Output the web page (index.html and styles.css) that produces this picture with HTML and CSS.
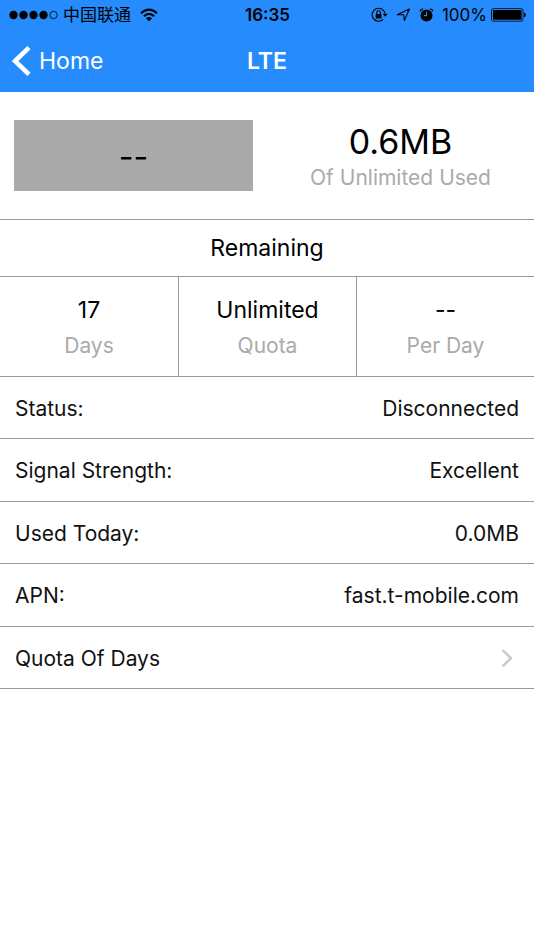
FILE: index.html
```html
<!DOCTYPE html>
<html lang="en">
<head>
<meta charset="utf-8">
<meta name="viewport" content="width=device-width, initial-scale=1">
<title>LTE</title>
<link rel="stylesheet" href="styles.css">
</head>
<body>
<header class="header">
  <div class="status-bar">
    <div class="status-side">
      <svg class="signal" width="50" height="10" viewBox="0 0 50 10" aria-hidden="true">
        <circle cx="4.5" cy="5" r="4.2"/><circle cx="14.5" cy="5" r="4.2"/><circle cx="24.5" cy="5" r="4.2"/><circle cx="34.5" cy="5" r="4.2"/>
        <circle cx="44.5" cy="5" r="3.7" fill="none" stroke="currentColor" stroke-width="0.8"/>
      </svg>
      <span class="carrier">中国联通</span>
      <svg class="wifi" width="18" height="14" viewBox="0 0 18 14" aria-hidden="true">
        <path d="M1 5.2Q9-2 17 5.2M3.9 8.2Q9 3.8 14.1 8.2" fill="none" stroke="currentColor" stroke-width="2"/>
        <path d="M6 10.4Q9 7.8 12 10.4L9 13.3Z"/>
      </svg>
    </div>
    <time class="clock">16:35</time>
    <div class="status-side status-right">
      <svg width="17" height="16" viewBox="0 0 17 16" aria-hidden="true">
        <path d="M12.2 12.4A6.5 6.5 0 1 1 14 6.5" fill="none" stroke="currentColor" stroke-width="1.1"/>
        <path d="M11.7 6.7H16.8L14.2 9.8Z"/>
        <rect x="4.7" y="6.9" width="5.8" height="4.6" rx="0.4"/>
        <path d="M5.8 7V5.6a1.8 1.8 0 0 1 3.6 0V7" fill="none" stroke="currentColor" stroke-width="1.1"/>
      </svg>
      <svg class="location" width="15" height="15" viewBox="0 0 15 15" aria-hidden="true">
        <path d="M1.2 6.8L13.4 1L8.4 12.6L7.7 6.8Z" fill="none" stroke="currentColor" stroke-width="1.1" stroke-linejoin="round"/>
      </svg>
      <svg class="alarm" width="15" height="14" viewBox="0 0 15 14" aria-hidden="true">
        <circle cx="7.5" cy="7.4" r="6"/>
        <path d="M1 3.4Q1.5 1.2 4 .8M14 3.4Q13.5 1.2 11 .8" fill="none" stroke="currentColor" stroke-width="1.2"/>
        <path class="alarm-hands" d="M7.6 4V7.6H5" fill="none" stroke-width="1.1"/>
      </svg>
      <span class="percent">100%</span>
      <svg class="battery" width="35" height="14" viewBox="0 0 35 14" aria-hidden="true">
        <rect x="0.5" y="0.6" width="31.5" height="12.6" rx="1.8" fill="none" stroke="currentColor" stroke-width="0.8"/>
        <rect x="1.9" y="2" width="28.7" height="9.8" rx="0.6"/>
        <path d="M33 4.6Q34.8 5 34.8 6.9T33 9.2Z"/>
      </svg>
    </div>
  </div>
  <nav class="nav-bar">
    <a class="back" href="#home">
      <svg width="19" height="30" viewBox="0 0 19 30" aria-hidden="true">
        <path d="M17 1.6L3 15L17 28.4" fill="none" stroke="currentColor" stroke-width="4.6"/>
      </svg>
      <span>Home</span>
    </a>
    <h1 class="title">LTE</h1>
  </nav>
</header>
<main>
  <section class="overview">
    <div class="gauge">--</div>
    <div class="usage">
      <div class="usage-value">0.6MB</div>
      <div class="caption">Of Unlimited Used</div>
    </div>
  </section>
  <section>
    <h2 class="section-title">Remaining</h2>
    <div class="stats">
      <div class="stat"><div class="stat-value">17</div><div class="caption">Days</div></div>
      <div class="stat"><div class="stat-value">Unlimited</div><div class="caption">Quota</div></div>
      <div class="stat"><div class="stat-value">--</div><div class="caption">Per Day</div></div>
    </div>
  </section>
  <section class="rows">
    <div class="row"><span>Status:</span><span>Disconnected</span></div>
    <div class="row"><span>Signal Strength:</span><span>Excellent</span></div>
    <div class="row"><span>Used Today:</span><span>0.0MB</span></div>
    <div class="row"><span>APN:</span><span>fast.t-mobile.com</span></div>
    <a class="row" href="#quota-of-days">
      <span>Quota Of Days</span>
      <svg class="chevron" width="12" height="20" viewBox="0 0 12 20" aria-hidden="true">
        <path d="M1.5 1L10 9.2L1.5 17.4" fill="none" stroke="currentColor" stroke-width="2.4"/>
      </svg>
    </a>
  </section>
</main>
</body>
</html>
```
FILE: styles.css
```css
* {
  box-sizing: border-box;
}

body {
  margin: 0;
  background: #fff;
  color: #000;
  font-family: Inter, "Noto Sans CJK SC", sans-serif;
  font-size: 21px;
  line-height: 28px;
}

svg {
  display: block;
  flex: none;
  fill: currentColor;
}

.header {
  background: #268bfc;
}

.status-bar {
  display: grid;
  grid-template-columns: 1fr auto 1fr;
  align-items: center;
  height: 30px;
  padding: 0 8px 0 9px;
  font-size: 17px;
}

.status-side {
  display: flex;
  align-items: center;
}

.status-right {
  justify-content: flex-end;
}

.carrier {
  margin: 0 9px 0 4px;
}

.clock {
  font-weight: 600;
}

.location {
  margin: 0 8px;
}

.alarm-hands {
  stroke: #268bfc;
}

.percent {
  margin: 0 4px 0 8px;
}

.nav-bar {
  display: grid;
  grid-template-columns: 1fr auto 1fr;
  align-items: center;
  height: 62px;
  padding: 0 12px;
  color: #fff;
  font-size: 23px;
}

.back {
  display: flex;
  align-items: center;
  gap: 8px;
  color: inherit;
  text-decoration: none;
}

.title {
  margin: 0;
  font-size: 23px;
  font-weight: 600;
}

.overview {
  display: grid;
  grid-template-columns: 1fr 1fr;
  align-items: center;
  height: 128px;
  border-bottom: 1px solid #999;
}

.gauge {
  margin: 0 14px;
  padding: 19px 0 16px;
  background: #aaa;
  font-size: 32px;
  line-height: 36px;
  text-align: center;
}

.usage {
  text-align: center;
}

.usage-value {
  font-size: 34px;
  line-height: 44px;
}

.caption {
  color: #aaa;
}

.section-title {
  margin: 0;
  padding: 14px 0;
  border-bottom: 1px solid #999;
  font-size: 23px;
  font-weight: 400;
  text-align: center;
}

.stats {
  display: grid;
  grid-template-columns: repeat(3, 1fr);
  border-bottom: 1px solid #999;
  text-align: center;
}

.stat {
  padding: 19px 0 16px;
}

.stat + .stat {
  border-left: 1px solid #999;
}

.stat-value {
  margin-bottom: 8px;
  font-size: 23px;
}

.row {
  display: flex;
  align-items: center;
  justify-content: space-between;
  height: 62px;
  padding: 2px 15px 0;
  border-bottom: 1px solid #999;
  color: #111;
  text-decoration: none;
}

.row:nth-child(even) {
  height: 63px;
}

.chevron {
  margin-right: 6px;
  color: #c7c7cc;
}
```
